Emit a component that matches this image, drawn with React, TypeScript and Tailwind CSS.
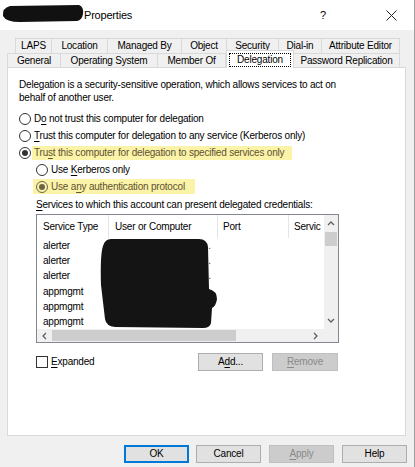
import type { ReactNode } from "react";

const row1 = [
  { label: "LAPS", w: 37 },
  { label: "Location", w: 56 },
  { label: "Managed By", w: 74 },
  { label: "Object", w: 45 },
  { label: "Security", w: 52 },
  { label: "Dial-in", w: 43 },
  { label: "Attribute Editor", w: 78 },
];

const row2 = [
  { label: "General", w: 54 },
  { label: "Operating System", w: 97 },
  { label: "Member Of", w: 68 },
  { label: "Delegation", w: 68, active: true },
  { label: "Password Replication", w: 106 },
];

const services = ["alerter", "alerter", "alerter", "appmgmt", "appmgmt", "appmgmt"];

function Radio({ checked, muted }: { checked?: boolean; muted?: boolean }) {
  return (
    <span
      className={`flex h-[12px] w-[12px] shrink-0 items-center justify-center rounded-full border ${
        muted ? "border-[#6f6545] bg-[#fbf3b0]" : "border-[#333333] bg-white"
      }`}
    >
      {checked && (
        <span className={`h-[6px] w-[6px] rounded-full ${muted ? "bg-[#6f6545]" : "bg-[#333333]"}`} />
      )}
    </span>
  );
}

function U({ children }: { children: ReactNode }) {
  return <span className="underline underline-offset-2">{children}</span>;
}

function Chevron({ dir }: { dir: "up" | "down" | "left" | "right" }) {
  const pts = {
    up: "1,5 4,2 7,5",
    down: "1,2 4,5 7,2",
    left: "5,1 2,4 5,7",
    right: "2,1 5,4 2,7",
  }[dir];
  return (
    <svg width="8" height="8" viewBox="0 0 8 8" className="block">
      <polyline points={pts} fill="none" stroke="#606060" strokeWidth="1.3" />
    </svg>
  );
}

function Button({
  children,
  w = 65,
  primary,
  disabled,
}: {
  children: ReactNode;
  w?: number;
  primary?: boolean;
  disabled?: boolean;
}) {
  const base = "flex h-[18px] items-center justify-center";
  const look = primary
    ? "border-2 border-[#0078d7] bg-[#e1e1e1] text-black"
    : disabled
      ? "border border-[#bfbfbf] bg-[#cccccc] text-[#8a8a8a]"
      : "border border-[#adadad] bg-[#e1e1e1] text-black";
  return (
    <div className={`${base} ${look}`} style={{ width: w }}>
      {children}
    </div>
  );
}

export default function App() {
  return (
    <div className="relative h-[467px] w-[415px] overflow-hidden border-r border-[#a0a0a0] bg-[#f0f0f0] font-['Liberation_Sans',Arial,sans-serif] text-[10px] leading-none tracking-[-0.2px] text-black">
      {/* title bar */}
      <div className="relative flex h-[30px] items-center bg-white">
        <span className="ml-[84px] text-[11px]">Properties</span>
        <span className="ml-auto mr-[60px] text-[11px]">?</span>
        <svg width="11" height="11" viewBox="0 0 11 11" className="mr-[17px]">
          <path d="M0.5 0.5 L10.5 10.5 M10.5 0.5 L0.5 10.5" stroke="#222" strokeWidth="1" />
        </svg>
        {/* redacted name */}
        <svg width="84" height="24" viewBox="0 0 84 24" className="absolute left-0 top-0">
          <path
            d="M10 6 L79 5 Q84 7 83 14 Q82 20 77 21 L20 22 Q6 22 3 16 Q2 8 10 6 Z"
            fill="#111"
          />
        </svg>
      </div>

      {/* tabs */}
      <div className="mt-[8px]">
        <div className="flex pl-[15px]">
          {row1.map((t, i) => (
            <div
              key={t.label}
              className={`flex h-[15px] items-center justify-center whitespace-nowrap border-t border-r border-[#d9d9d9] ${
                i === 0 ? "border-l" : ""
              }`}
              style={{ width: t.w }}
            >
              {t.label}
            </div>
          ))}
        </div>
        <div className="flex items-end pl-[7px]">
          {row2.map((t, i) =>
            t.active ? (
              <div
                key={t.label}
                className="z-10 -mb-px -mt-[3px] flex h-[18px] items-center justify-center border-x border-t border-[#d9d9d9] bg-white"
                style={{ width: t.w }}
              >
                <span className="whitespace-nowrap border border-dotted border-black px-[7px] py-[1px]">
                  {t.label}
                </span>
              </div>
            ) : (
              <div
                key={t.label}
                className={`flex h-[14px] items-center justify-center whitespace-nowrap border-t border-r border-[#d9d9d9] ${
                  i === 0 ? "border-l" : ""
                }`}
                style={{ width: t.w }}
              >
                {t.label}
              </div>
            ),
          )}
        </div>
      </div>

      {/* tab page */}
      <div className="ml-[7px] h-[369px] w-[399px] border border-[#d9d9d9] bg-white pl-[11px] pt-[10px]">
        <p className="leading-[13px]">
          Delegation is a security-sensitive operation, which allows services to act on
          <br />
          behalf of another user.
        </p>

        <div className="mt-[6px] flex flex-col whitespace-nowrap">
          <div className="flex h-[17px] items-center gap-[3px]">
            <Radio />
            <span>
              D<U>o</U> not trust this computer for delegation
            </span>
          </div>
          <div className="flex h-[17px] items-center gap-[3px]">
            <Radio />
            <span>
              <U>T</U>rust this computer for delegation to any service (Kerberos only)
            </span>
          </div>
          <div className="flex h-[17px] items-center gap-[1px]">
            <Radio checked />
            <span className="flex h-[14px] items-center bg-[#fbf3a8] pl-[2px] pr-[8px] text-[#5f5232]">
              <span>
                Tru<U>s</U>t this computer for delegation to specified services only
              </span>
            </span>
          </div>
          <div className="ml-[17px] flex h-[17px] items-center gap-[3px]">
            <Radio />
            <span>
              Use <U>K</U>erberos only
            </span>
          </div>
          <div className="ml-[14px] flex h-[17px] items-center">
            <span className="flex h-[15px] items-center gap-[3px] bg-[#fbf3a8] pl-[3px] pr-[10px] text-[#5f5232]">
              <Radio checked muted />
              <span>
                Use a<U>n</U>y authentication protocol
              </span>
            </span>
          </div>
        </div>

        <div className="ml-[17px] w-[303px]">
          <div className="mt-[3px] flex h-[14px] items-center whitespace-nowrap">
            <span>
              <U>S</U>ervices to which this account can present delegated credentials:
            </span>
          </div>

          {/* list view */}
          <div className="relative mt-[2px] flex h-[129px] flex-col border border-[#828790] bg-white">
            <div className="flex h-[114px]">
              <div className="flex w-[287px] flex-col overflow-hidden whitespace-nowrap">
                <div className="flex h-[23px] shrink-0">
                  <div className="flex w-[72px] shrink-0 items-center border-r border-[#e5e5e5] pl-[6px]">
                    Service Type
                  </div>
                  <div className="flex w-[109px] shrink-0 items-center border-r border-[#e5e5e5] pl-[6px]">
                    User or Computer
                  </div>
                  <div className="flex w-[71px] shrink-0 items-center border-r border-[#e5e5e5] pl-[5px]">
                    Port
                  </div>
                  <div className="flex w-[35px] shrink-0 items-center overflow-hidden pl-[5px]">
                    Servic
                  </div>
                </div>
                {services.map((s, i) => (
                  <div key={i} className="flex h-[15.3px] shrink-0 items-center">
                    <span className="w-[72px] pl-[6px]">{s}</span>
                    <span className="pl-[94px] text-[#444]">{i < 3 ? "..." : ""}</span>
                  </div>
                ))}
              </div>
              {/* vertical scrollbar */}
              <div className="flex w-[14px] flex-col bg-[#f0f0f0]">
                <div className="flex h-[17px] items-center justify-center">
                  <Chevron dir="up" />
                </div>
                <div className="mx-auto h-[14px] w-[12px] bg-[#cdcdcd]" />
                <div className="flex-1" />
                <div className="flex h-[17px] items-center justify-center">
                  <Chevron dir="down" />
                </div>
              </div>
            </div>
            {/* horizontal scrollbar */}
            <div className="flex h-[13px]">
              <div className="flex w-[287px] items-center bg-[#f0f0f0]">
                <div className="flex w-[15px] items-center justify-center">
                  <Chevron dir="left" />
                </div>
                <div className="h-[11px] w-[184px] bg-[#cdcdcd]" />
                <div className="flex-1" />
                <div className="flex w-[16px] items-center justify-center">
                  <Chevron dir="right" />
                </div>
              </div>
              <div className="w-[14px] bg-[#f0f0f0]" />
            </div>

            {/* redacted user column */}
            <svg
              width="190"
              height="120"
              viewBox="0 0 190 120"
              className="absolute left-0 top-0"
            >
              <path
                d="M74 24 L162 24 Q170 24 171 32 L172 74 Q180 76 180 84 Q179 91 175 93 L174 108 Q173 113 166 113 L78 112 Q69 111 68 104 L64 70 Q63 40 66 31 Q68 24 74 24 Z"
                fill="#141414"
              />
            </svg>
          </div>

          <div className="mt-[10px] flex h-[18px] items-center pr-[1px]">
            <div className="flex items-center gap-[3px]">
              <span className="h-[12px] w-[12px] border border-[#333333] bg-white" />
              <span>
                <U>E</U>xpanded
              </span>
            </div>
            <div className="ml-auto flex gap-[9px]">
              <Button>
                A<U>d</U>d...
              </Button>
              <Button w={66} disabled>
                <U>R</U>emove
              </Button>
            </div>
          </div>
        </div>
      </div>

      {/* dialog buttons */}
      <div className="mt-[9px] flex pl-[124px]">
        <Button primary>OK</Button>
        <div className="ml-[7px]">
          <Button>Cancel</Button>
        </div>
        <div className="ml-[8px]">
          <Button disabled>
            <U>A</U>pply
          </Button>
        </div>
        <div className="ml-[8px]">
          <Button>Help</Button>
        </div>
      </div>
    </div>
  );
}
